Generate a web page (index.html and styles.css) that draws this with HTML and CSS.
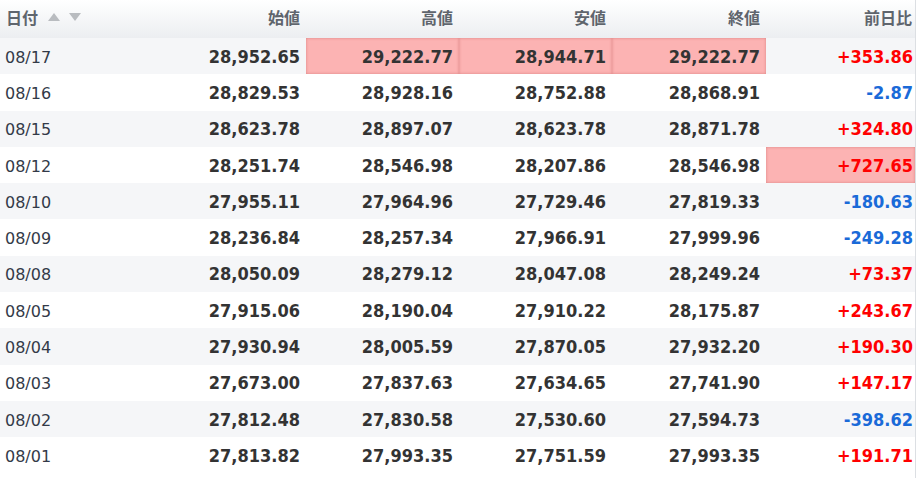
FILE: index.html
```html
<!DOCTYPE html>
<html lang="ja">
<head>
<meta charset="utf-8">
<link rel="stylesheet" href="styles.css">
</head>
<body>
<div class="wrap">
<table class="tbl">
<colgroup><col class="c1"><col class="c2"><col class="c3"><col class="c4"><col class="c5"><col class="c6"></colgroup>
<thead>
<tr>
<th class="left">日付<span class="sort"><span class="up"></span><span class="down"></span></span></th>
<th>始値</th><th>高値</th><th>安値</th><th>終値</th><th>前日比</th>
</tr>
</thead>
<tbody>
<tr><td class="date">08/17</td><td>28,952.65</td><td class="hl">29,222.77</td><td class="hl">28,944.71</td><td class="hl">29,222.77</td><td class="up">+353.86</td></tr>
<tr><td class="date">08/16</td><td>28,829.53</td><td>28,928.16</td><td>28,752.88</td><td>28,868.91</td><td class="dn">-2.87</td></tr>
<tr><td class="date">08/15</td><td>28,623.78</td><td>28,897.07</td><td>28,623.78</td><td>28,871.78</td><td class="up">+324.80</td></tr>
<tr><td class="date">08/12</td><td>28,251.74</td><td>28,546.98</td><td>28,207.86</td><td>28,546.98</td><td class="up hl">+727.65</td></tr>
<tr><td class="date">08/10</td><td>27,955.11</td><td>27,964.96</td><td>27,729.46</td><td>27,819.33</td><td class="dn">-180.63</td></tr>
<tr><td class="date">08/09</td><td>28,236.84</td><td>28,257.34</td><td>27,966.91</td><td>27,999.96</td><td class="dn">-249.28</td></tr>
<tr><td class="date">08/08</td><td>28,050.09</td><td>28,279.12</td><td>28,047.08</td><td>28,249.24</td><td class="up">+73.37</td></tr>
<tr><td class="date">08/05</td><td>27,915.06</td><td>28,190.04</td><td>27,910.22</td><td>28,175.87</td><td class="up">+243.67</td></tr>
<tr><td class="date">08/04</td><td>27,930.94</td><td>28,005.59</td><td>27,870.05</td><td>27,932.20</td><td class="up">+190.30</td></tr>
<tr><td class="date">08/03</td><td>27,673.00</td><td>27,837.63</td><td>27,634.65</td><td>27,741.90</td><td class="up">+147.17</td></tr>
<tr><td class="date">08/02</td><td>27,812.48</td><td>27,830.58</td><td>27,530.60</td><td>27,594.73</td><td class="dn">-398.62</td></tr>
<tr><td class="date">08/01</td><td>27,813.82</td><td>27,993.35</td><td>27,751.59</td><td>27,993.35</td><td class="up">+191.71</td></tr>
</tbody>
</table>
</div>
</body>
</html>
```
FILE: styles.css
```css
html, body { margin: 0; padding: 0; background: #fff; }
.wrap {
  width: 915px;
  border-right: 1px solid #dcdfe3;
  height: 478px;
  overflow: hidden;
}
.tbl {
  border-collapse: collapse;
  table-layout: fixed;
  width: 915px;
  font-family: "DejaVu Sans Condensed", "DejaVu Sans", "Noto Sans CJK JP", sans-serif;
}
.c1, .c2, .c3, .c4 { width: 153px; }
.c5 { width: 154px; }
.c6 { width: 149px; }
.tbl th {
  height: 38px;
  padding: 0 6px 5px 0;
  box-sizing: border-box;
  text-align: right;
  font-family: "Noto Sans CJK JP", sans-serif;
  font-weight: bold;
  font-size: 16px;
  color: #5f656d;
  background: linear-gradient(#ffffff, #eceef1);
}
.tbl th.left { text-align: left; padding-left: 6px; }
.tbl th:last-child { padding-right: 3px; }
.sort { display: inline-flex; gap: 9px; margin-left: 10px; vertical-align: 3px; }
.sort span { width: 0; height: 0; border-left: 6px solid transparent; border-right: 6px solid transparent; }
.sort .up { border-bottom: 8px solid #b9bcc0; }
.sort .down { border-top: 8px solid #b9bcc0; }
.tbl td {
  height: 36.3px;
  padding: 0 6px 0 0;
  box-sizing: border-box;
  text-align: right;
  font-weight: bold;
  font-size: 18px;
  color: #333;
}
.tbl tbody tr:nth-child(odd) td { background: #f5f6f8; }
.tbl tbody tr td.hl {
  background: #fcb3b3;
  box-shadow: inset 0 0 3px rgba(160, 40, 40, 0.35);
}
.tbl td.date {
  text-align: left;
  padding-left: 5px;
  padding-top: 2px;
  font-family: "DejaVu Sans", sans-serif;
  font-weight: normal;
  font-size: 16px;
  color: #333a48;
}
.tbl td:last-child { padding-right: 2px; }
.tbl td.up { color: #ff0000; }
.tbl td.dn { color: #1a6ad8; }
```
